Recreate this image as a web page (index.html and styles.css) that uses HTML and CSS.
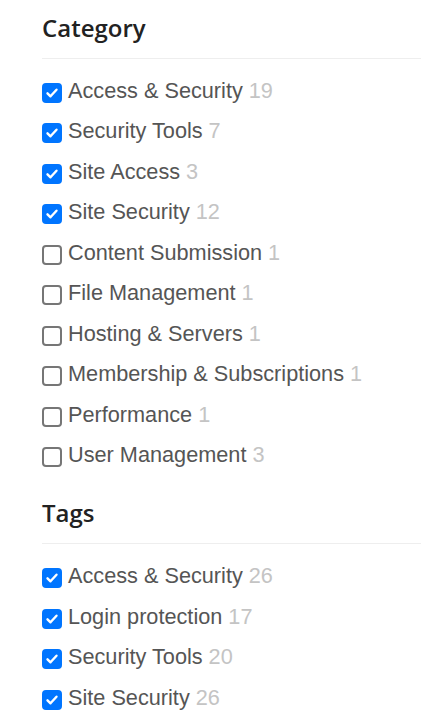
FILE: index.html
```html
<!DOCTYPE html>
<html lang="en">
<head>
    <meta charset="UTF-8">
    <meta name="viewport" content="width=device-width, initial-scale=1.0">
    <title>Filters</title>
    <link rel="stylesheet" href="styles.css">
</head>
<body>
    <div class="filters">
        <section class="filter-group">
            <h3 class="filter-title">Category</h3>
            <ul class="filter-list">
                <li><label><input type="checkbox" checked><span class="name">Access &amp; Security</span><span class="count">19</span></label></li>
                <li><label><input type="checkbox" checked><span class="name">Security Tools</span><span class="count">7</span></label></li>
                <li><label><input type="checkbox" checked><span class="name">Site Access</span><span class="count">3</span></label></li>
                <li><label><input type="checkbox" checked><span class="name">Site Security</span><span class="count">12</span></label></li>
                <li><label><input type="checkbox"><span class="name">Content Submission</span><span class="count">1</span></label></li>
                <li><label><input type="checkbox"><span class="name">File Management</span><span class="count">1</span></label></li>
                <li><label><input type="checkbox"><span class="name">Hosting &amp; Servers</span><span class="count">1</span></label></li>
                <li><label><input type="checkbox"><span class="name">Membership &amp; Subscriptions</span><span class="count">1</span></label></li>
                <li><label><input type="checkbox"><span class="name">Performance</span><span class="count">1</span></label></li>
                <li><label><input type="checkbox"><span class="name">User Management</span><span class="count">3</span></label></li>
            </ul>
        </section>

        <section class="filter-group">
            <h3 class="filter-title">Tags</h3>
            <ul class="filter-list">
                <li><label><input type="checkbox" checked><span class="name">Access &amp; Security</span><span class="count">26</span></label></li>
                <li><label><input type="checkbox" checked><span class="name">Login protection</span><span class="count">17</span></label></li>
                <li><label><input type="checkbox" checked><span class="name">Security Tools</span><span class="count">20</span></label></li>
                <li><label><input type="checkbox" checked><span class="name">Site Security</span><span class="count">26</span></label></li>
            </ul>
        </section>
    </div>
</body>
</html>
```

FILE: styles.css
```css
body {
    margin: 0;
    background-color: #fff;
    font-family: "Liberation Sans", Arial, sans-serif;
}
.filters {
    padding: 12.7px 0 0 42px;
}
.filter-group + .filter-group {
    margin-top: 22px;
}
.filter-title {
    margin: 0;
    font-family: "Open Sans", sans-serif;
    font-weight: 600;
    font-size: 24px;
    line-height: 30px;
    color: #222;
    padding-bottom: 15.3px;
    border-bottom: 1px solid #eeeeee;
}
.filter-list {
    list-style: none;
    margin: 11.75px 0 0;
    padding: 0;
}
.filter-list li {
    height: 40.5px;
    display: flex;
    align-items: center;
}
.filter-list label {
    display: flex;
    align-items: center;
    font-size: 21.7px;
    color: #555;
}
.filter-list input {
    appearance: none;
    -webkit-appearance: none;
    width: 20px;
    height: 20px;
    margin: 0 6px 0 0;
    border: 2px solid #767676;
    border-radius: 4px;
    background: #fff;
    position: relative;
    top: 2px;
}
.filter-list input:checked {
    border-color: #0075ff;
    background: #0075ff url("data:image/svg+xml,%3Csvg xmlns='http://www.w3.org/2000/svg' viewBox='0 0 16 16'%3E%3Cpath d='M3.5 8.3l3 3 6-6.6' fill='none' stroke='white' stroke-width='2.4' stroke-linecap='round' stroke-linejoin='round'/%3E%3C/svg%3E") center / 16px no-repeat;
}
.count {
    margin-left: 6px;
    color: #c4c4c4;
}
```
